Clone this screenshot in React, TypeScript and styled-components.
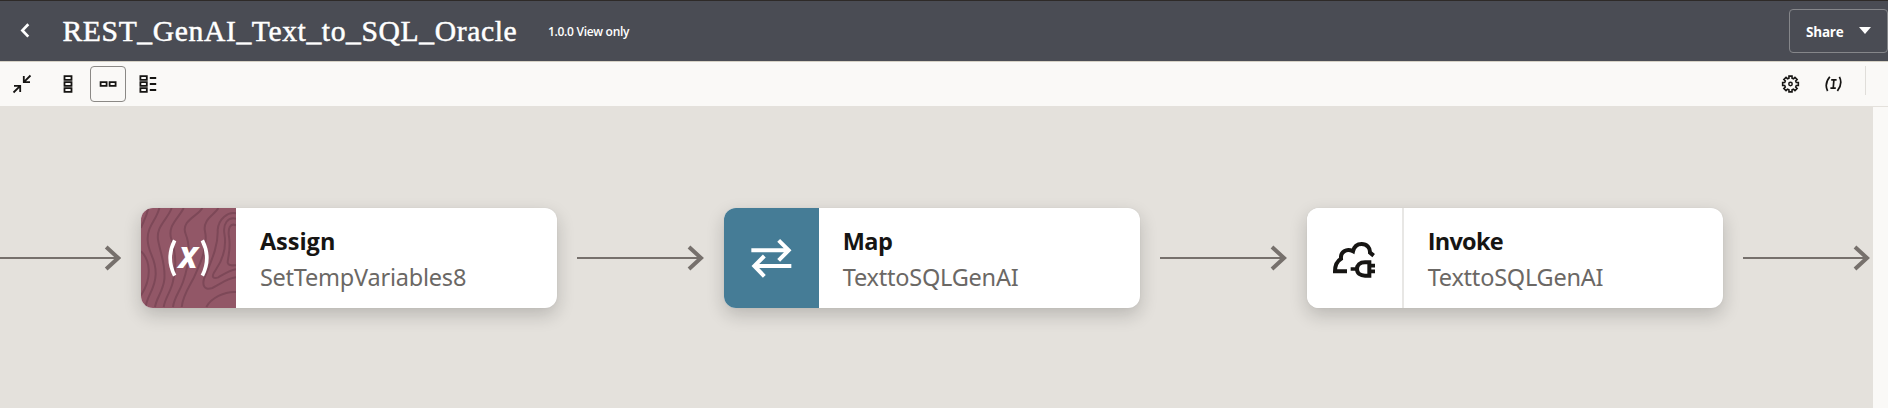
import React from "react";
import styled, { createGlobalStyle } from "styled-components";

const GlobalStyle = createGlobalStyle`
  * { box-sizing: border-box; }
  body { margin: 0; background: #faf9f7; overflow: hidden; }
`;

const Page = styled.div`
  display: flex;
  flex-direction: column;
  height: 408px;
  width: 1888px;
  overflow: hidden;
  font-family: "Open Sans", "Noto Sans", sans-serif;
  color: #161513;
`;

const Header = styled.header`
  display: flex;
  align-items: flex-start;
  flex: none;
  height: 62px;
  background: #4a4c54;
  border-top: 1px solid #2e2a28;
  border-bottom: 1px solid #d6d2c6;
  color: #fff;
`;

const BackButton = styled.button`
  display: flex;
  width: 62.5px;
  height: 60px;
  padding: 21px 0 0 20px;
  border: 0;
  background: none;
`;

const Title = styled.h1`
  margin: 0;
  width: 485.5px;
  font: 400 29.6px/60px "Liberation Serif", serif;
  letter-spacing: 0.62px;
  white-space: nowrap;
  -webkit-text-stroke: 0.5px #fff;
`;

const Version = styled.span`
  flex: 1;
  font-size: 12px;
  font-weight: 600;
  letter-spacing: -0.3px;
  line-height: 62px;
`;

const ShareButton = styled.button`
  display: flex;
  align-items: center;
  gap: 15px;
  width: 99px;
  height: 44px;
  margin-top: 8px;
  padding: 0 0 2px 16px;
  border: 1px solid #85868a;
  border-radius: 4px;
  background: none;
  color: #fff;
  font: 700 13.5px/44px "Open Sans", sans-serif;
  letter-spacing: -0.2px;

  span { padding-top: 3px; }
`;

const Toolbar = styled.div`
  display: flex;
  align-items: flex-start;
  flex: none;
  height: 44px;
  padding-top: 4px;
  background: #faf9f7;
`;

const ToolButton = styled.button<{ $active?: boolean; $gap?: number }>`
  display: flex;
  align-items: center;
  justify-content: center;
  width: 36px;
  height: 36px;
  margin-left: ${(p) => p.$gap ?? 0}px;
  padding: 0;
  border: 1px solid ${(p) => (p.$active ? "#8b8986" : "transparent")};
  border-radius: 4px;
  background: none;
`;

const Spacer = styled.div`
  flex: 1;
`;

const Divider = styled.div`
  width: 1px;
  height: 29px;
  margin: 0 22px 0 13px;
  background: #e0deda;
`;

const Body = styled.div`
  display: flex;
  flex: 1;
`;

const Canvas = styled.main`
  display: flex;
  align-items: flex-start;
  gap: 19.7px;
  width: 1873px;
  height: 302px;
  padding-top: 102px;
  background: #e4e1dc;
  overflow: hidden;
`;

const Rail = styled.aside`
  flex: 1;
  border-top: 1px solid #e4e1dc;
`;

const ArrowSvg = styled.svg`
  flex: none;
  display: block;
  margin-top: 37px;
`;

const Card = styled.article`
  display: flex;
  flex: none;
  width: 416.5px;
  height: 99.6px;
  border-radius: 12px;
  background: #fff;
  box-shadow: 0 7px 18px rgba(22, 21, 19, 0.2), 0 0 2px rgba(22, 21, 19, 0.06);
  overflow: hidden;
`;

const Tile = styled.div<{ $bg: string; $divided?: boolean }>`
  flex: none;
  width: ${(p) => (p.$divided ? 97 : 95)}px;
  background: ${(p) => p.$bg};
  border-right: ${(p) => (p.$divided ? "2px solid #e8e7e5" : "0")};
`;

const CardText = styled.div`
  padding: 16px 0 0 24px;
  white-space: nowrap;
`;

const CardTitle = styled.h2<{ $tracking?: number }>`
  margin: 0;
  font-size: 23.5px;
  font-weight: 700;
  letter-spacing: ${(p) => p.$tracking ?? 0}px;
  line-height: 35px;
`;

const CardName = styled.p`
  margin: 0;
  color: #6b6865;
  font-family: "Noto Sans", sans-serif;
  font-size: 23.5px;
  letter-spacing: -0.22px;
  line-height: 36px;
`;

function Arrow({ width }: { width: number }) {
  const e = width - 2;
  return (
    <ArrowSvg width={width} height="26" viewBox={`0 0 ${width} 26`} fill="none" stroke="#76706c">
      <path d={`M0 13H${e}`} strokeWidth="2" />
      <path d={`M${e - 13} 2L${e - 1} 13L${e - 13} 24`} strokeWidth="4" />
    </ArrowSvg>
  );
}

const CONTOURS = [
  "M22 0C16 30 4 46 0 60",
  "M55 0C46 38 18 54 20 96C22 140 46 150 44 200C42 245 18 262 14 297",
  "M92 0C80 35 42 56 52 100C62 150 74 170 70 215C66 250 46 270 42 297",
  "M128 0C114 30 76 54 92 96C106 140 106 180 96 220C90 250 72 270 68 297",
  "M184 0C172 24 118 38 134 78C150 118 142 175 126 222C114 255 100 268 96 297",
  "M232 0C222 20 184 34 192 70C202 116 178 166 158 210C142 240 126 262 122 297",
  "M285 16C262 10 232 32 230 66C232 112 212 156 196 196C180 226 186 250 214 240C240 228 256 212 285 208",
  "M285 32C260 26 246 48 250 76C258 122 242 160 224 186C210 206 214 214 232 208C250 198 264 188 285 184",
  "M285 52C268 44 260 60 264 86C270 126 260 150 260 164C262 174 272 172 285 172",
  "M285 252C250 250 210 270 196 297",
  "M0 130C28 156 34 210 0 262",
];

function AssignIcon() {
  return (
    <svg width="95" height="100" viewBox="0 0 285 300" fill="none">
      <g stroke="#7a4656" strokeWidth="6" opacity="0.85">
        {CONTOURS.map((d) => (
          <path key={d} d={d} />
        ))}
      </g>
      <g stroke="#fff" strokeWidth="11">
        <path d="M101 97Q74 150 101 203" />
        <path d="M184 97Q211 150 184 203" />
      </g>
      <text
        x="142"
        y="181"
        textAnchor="middle"
        fill="#fff"
        fontFamily="Open Sans, sans-serif"
        fontSize="110"
        fontStyle="italic"
        fontWeight="700"
      >
        x
      </text>
    </svg>
  );
}

function MapIcon() {
  return (
    <svg width="95" height="100" viewBox="0 0 285 300" fill="none" stroke="#fff" strokeWidth="12">
      <path d="M82 127H194M164 97L194 127L164 157" />
      <path d="M202 174H90M121 144L91 174L121 205" />
    </svg>
  );
}

function InvokeIcon() {
  return (
    <svg width="95" height="100" viewBox="0 0 285 300" fill="none" stroke="#161513" strokeWidth="12">
      <path d="M120 190H84C84 170 92 158 102 152C100 132 118 120 138 130C142 112 154 108 164 108C180 108 190 120 189 134L200 143" />
      <path d="M187 163H174C158 163 150 172 150 183C150 196 160 203 174 203H187Z" />
      <path d="M150 183H131M187 173H204M187 190H204" strokeWidth="11" />
    </svg>
  );
}

function GearIcon() {
  const teeth = 8;
  const profile = [[-15, 6], [-11, 8], [11, 8], [15, 6]];
  const outline = Array.from({ length: teeth }, (_, i) =>
    profile
      .map(([a, r]) => {
        const t = (((i * 360) / teeth + a) * Math.PI) / 180;
        return `${(9.5 + r * Math.sin(t)).toFixed(2)},${(10 - r * Math.cos(t)).toFixed(2)}`;
      })
      .join(" ")
  ).join(" ");
  return (
    <svg width="20" height="20" fill="none" stroke="#161513">
      <polygon points={outline} strokeWidth="1.6" />
      <circle cx="9.5" cy="10" r="1.7" strokeWidth="1.5" />
    </svg>
  );
}

export default function App() {
  return (
    <Page>
      <GlobalStyle />
      <Header>
        <BackButton aria-label="Back">
          <svg width="12" height="18" fill="none" stroke="#fff" strokeWidth="2.7">
            <path d="M8.3 2.2L2.4 8.4L8.3 14.6" />
          </svg>
        </BackButton>
        <Title>REST_GenAI_Text_to_SQL_Oracle</Title>
        <Version>1.0.0 View only</Version>
        <ShareButton>
          <span>Share</span>
          <svg width="12" height="7">
            <path d="M0 0H12L6 7Z" fill="#fff" />
          </svg>
        </ShareButton>
      </Header>
      <Toolbar>
        <ToolButton $gap={4} aria-label="Collapse">
          <svg width="20" height="20" fill="none" stroke="#161513" strokeWidth="1.8">
            <path d="M18.5 1.5L11.8 8.2M11.8 2V8.2H18M1.5 18.5L8.2 11.8M2 11.8H8.2V18" />
          </svg>
        </ToolButton>
        <ToolButton $gap={10} aria-label="Vertical layout">
          <svg width="20" height="20" fill="none" stroke="#161513" strokeWidth="1.8">
            <path d="M6.5 2.2H13.5V5.8H6.5ZM6.5 8.2H13.5V11.8H6.5ZM6.5 14.2H13.5V17.8H6.5Z" />
          </svg>
        </ToolButton>
        <ToolButton $gap={4} $active aria-label="Horizontal layout">
          <svg width="20" height="20" fill="none" stroke="#161513" strokeWidth="1.8">
            <path d="M2.6 8.2H8.6V11.8H2.6ZM11.6 8.2H17.6V11.8H11.6Z" />
          </svg>
        </ToolButton>
        <ToolButton $gap={4} aria-label="Outline">
          <svg width="20" height="20" fill="none" stroke="#161513" strokeWidth="1.8">
            <path d="M2.4 2.2H8.8V5.8H2.4ZM2.4 8.2H8.8V11.8H2.4ZM2.4 14.2H8.8V17.8H2.4ZM11.8 4H18.2M11.8 10H18.2M11.8 16H18.2" />
          </svg>
        </ToolButton>
        <Spacer />
        <ToolButton aria-label="Settings">
          <GearIcon />
        </ToolButton>
        <ToolButton $gap={7} aria-label="Variables">
          <svg width="20" height="20" fill="none" stroke="#161513" strokeWidth="1.7">
            <path d="M5.8 2.8Q0 10 3.6 17M15.4 2.8Q19 9.5 13.4 17M7.2 5.8H12.6M6.4 14.2H11.8M9.9 5.8L9.2 14.2" />
          </svg>
        </ToolButton>
        <Divider />
      </Toolbar>
      <Body>
        <Canvas>
          <Arrow width={121.2} />
          <Card>
            <Tile $bg="#925868"><AssignIcon /></Tile>
            <CardText>
              <CardTitle>Assign</CardTitle>
              <CardName>SetTempVariables8</CardName>
            </CardText>
          </Card>
          <Arrow width={127} />
          <Card>
            <Tile $bg="#457c96"><MapIcon /></Tile>
            <CardText>
              <CardTitle $tracking={-0.6}>Map</CardTitle>
              <CardName>TexttoSQLGenAI</CardName>
            </CardText>
          </Card>
          <Arrow width={127} />
          <Card>
            <Tile $bg="#fff" $divided><InvokeIcon /></Tile>
            <CardText>
              <CardTitle $tracking={-0.7}>Invoke</CardTitle>
              <CardName>TexttoSQLGenAI</CardName>
            </CardText>
          </Card>
          <Arrow width={127} />
        </Canvas>
        <Rail />
      </Body>
    </Page>
  );
}
